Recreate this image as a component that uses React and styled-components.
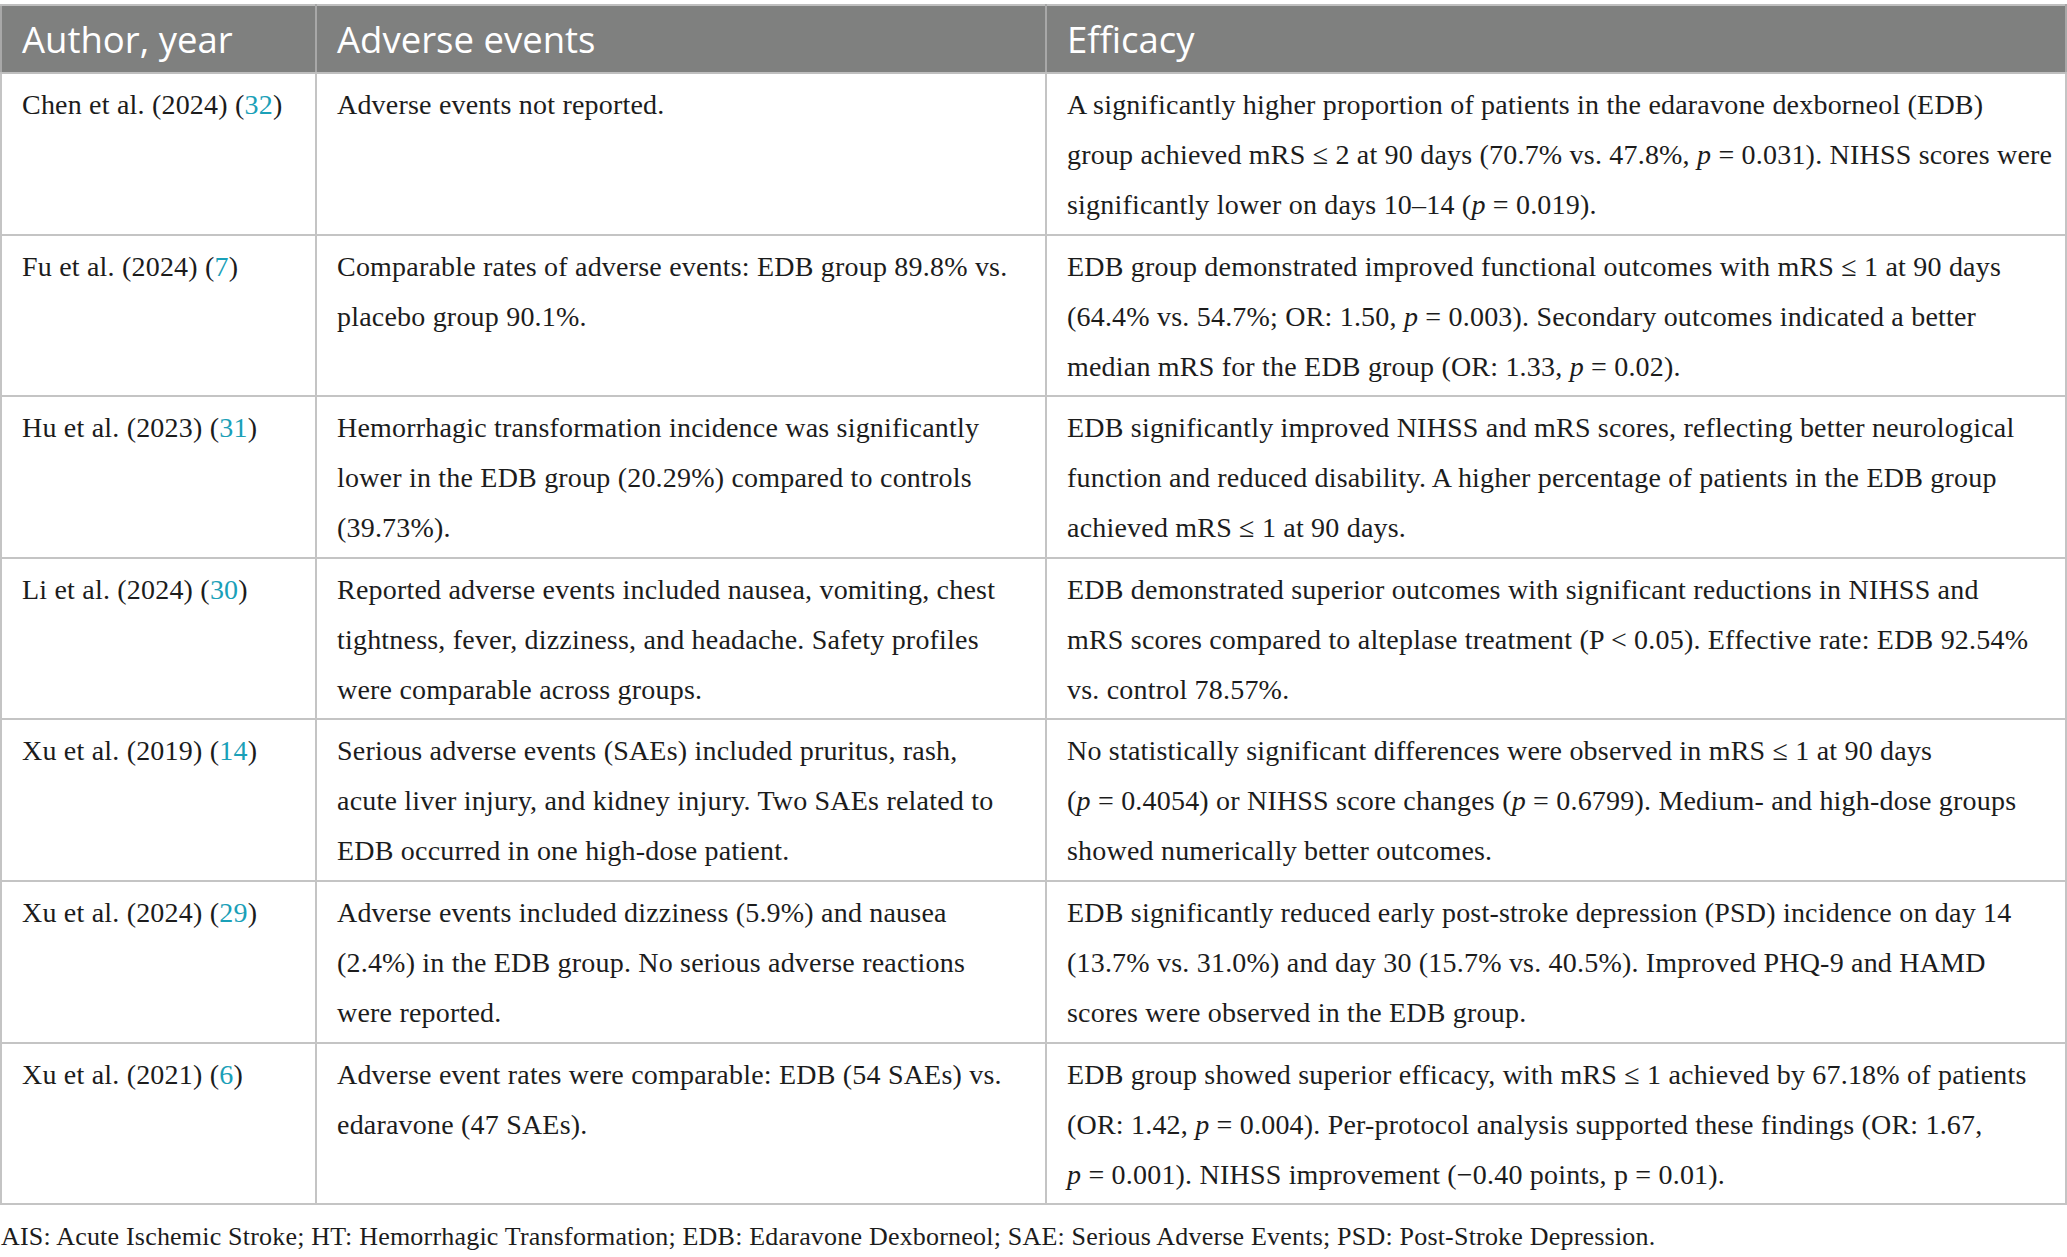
import React from "react";
import styled, { createGlobalStyle } from "styled-components";

const GlobalStyle = createGlobalStyle`
  html, body {
    margin: 0;
    padding: 0;
    background: #ffffff;
  }
  body {
    font-family: "Liberation Serif", "Times New Roman", serif;
    color: #1c1c1c;
  }
`;

const Page = styled.div`
  width: 2067px;
  padding-top: 4px;
  box-sizing: border-box;
`;

const Table = styled.table`
  width: 2067px;
  border-collapse: collapse;
  table-layout: fixed;
  border: 2px solid #bfbfbf;
`;

const HeadCell = styled.th`
  box-sizing: border-box;
  background: #7f807f;
  color: #ffffff;
  font-family: "Open Sans", "Noto Sans", sans-serif;
  font-weight: 400;
  font-size: 36.5px;
  line-height: 40px;
  text-align: left;
  padding: 13px 20px 13px 20px;
  border: 2px solid #a8a8a8;
  border-top-color: #bfbfbf;
  border-bottom-color: #bfbfbf;
  width: ${(p) => p.$w};
  white-space: nowrap;
`;

const BodyCell = styled.td`
  vertical-align: top;
  font-size: 28px;
  letter-spacing: 0.2px;
  line-height: 50px;
  padding: 6px 4px 3.6px 20px;
  border: 2px solid #c4c4c4;
  white-space: nowrap;
  overflow: hidden;
`;

const Line = styled.span`
  display: block;
`;

const Ref = styled.span`
  color: #1aa0b8;
`;

const Footnote = styled.p`
  margin: 0;
  padding: 12px 0 0 1px;
  font-size: 26px;
  letter-spacing: 0.2px;
  line-height: 40px;
  color: #1c1c1c;
`;

const P = () => <i>p</i>;

const rows = [
  {
    author: "Chen et al. (2024)",
    ref: "32",
    adverse: [<>Adverse events not reported.</>],
    efficacy: [
      <>A significantly higher proportion of patients in the edaravone dexborneol (EDB)</>,
      <>group achieved mRS ≤ 2 at 90 days (70.7% vs. 47.8%, <P /> = 0.031). NIHSS scores were</>,
      <>significantly lower on days 10–14 (<P /> = 0.019).</>,
    ],
  },
  {
    author: "Fu et al. (2024)",
    ref: "7",
    adverse: [
      <>Comparable rates of adverse events: EDB group 89.8% vs.</>,
      <>placebo group 90.1%.</>,
    ],
    efficacy: [
      <>EDB group demonstrated improved functional outcomes with mRS ≤ 1 at 90 days</>,
      <>(64.4% vs. 54.7%; OR: 1.50, <P /> = 0.003). Secondary outcomes indicated a better</>,
      <>median mRS for the EDB group (OR: 1.33, <P /> = 0.02).</>,
    ],
  },
  {
    author: "Hu et al. (2023)",
    ref: "31",
    adverse: [
      <>Hemorrhagic transformation incidence was significantly</>,
      <>lower in the EDB group (20.29%) compared to controls</>,
      <>(39.73%).</>,
    ],
    efficacy: [
      <>EDB significantly improved NIHSS and mRS scores, reflecting better neurological</>,
      <>function and reduced disability. A higher percentage of patients in the EDB group</>,
      <>achieved mRS ≤ 1 at 90 days.</>,
    ],
  },
  {
    author: "Li et al. (2024)",
    ref: "30",
    adverse: [
      <>Reported adverse events included nausea, vomiting, chest</>,
      <>tightness, fever, dizziness, and headache. Safety profiles</>,
      <>were comparable across groups.</>,
    ],
    efficacy: [
      <>EDB demonstrated superior outcomes with significant reductions in NIHSS and</>,
      <>mRS scores compared to alteplase treatment (P &lt; 0.05). Effective rate: EDB 92.54%</>,
      <>vs. control 78.57%.</>,
    ],
  },
  {
    author: "Xu et al. (2019)",
    ref: "14",
    adverse: [
      <>Serious adverse events (SAEs) included pruritus, rash,</>,
      <>acute liver injury, and kidney injury. Two SAEs related to</>,
      <>EDB occurred in one high-dose patient.</>,
    ],
    efficacy: [
      <>No statistically significant differences were observed in mRS ≤ 1 at 90 days</>,
      <>(<P /> = 0.4054) or NIHSS score changes (<P /> = 0.6799). Medium- and high-dose groups</>,
      <>showed numerically better outcomes.</>,
    ],
  },
  {
    author: "Xu et al. (2024)",
    ref: "29",
    adverse: [
      <>Adverse events included dizziness (5.9%) and nausea</>,
      <>(2.4%) in the EDB group. No serious adverse reactions</>,
      <>were reported.</>,
    ],
    efficacy: [
      <>EDB significantly reduced early post-stroke depression (PSD) incidence on day 14</>,
      <>(13.7% vs. 31.0%) and day 30 (15.7% vs. 40.5%). Improved PHQ-9 and HAMD</>,
      <>scores were observed in the EDB group.</>,
    ],
  },
  {
    author: "Xu et al. (2021)",
    ref: "6",
    adverse: [
      <>Adverse event rates were comparable: EDB (54 SAEs) vs.</>,
      <>edaravone (47 SAEs).</>,
    ],
    efficacy: [
      <>EDB group showed superior efficacy, with mRS ≤ 1 achieved by 67.18% of patients</>,
      <>(OR: 1.42, <P /> = 0.004). Per-protocol analysis supported these findings (OR: 1.67,</>,
      <><P /> = 0.001). NIHSS improvement (−0.40 points, p = 0.01).</>,
    ],
  },
];

const Lines = ({ items }) => (
  <>
    {items.map((l, i) => (
      <Line key={i}>{l}</Line>
    ))}
  </>
);

export default function App() {
  return (
    <Page>
      <GlobalStyle />
      <Table>
        <thead>
          <tr>
            <HeadCell $w="315px">Author, year</HeadCell>
            <HeadCell $w="730px">Adverse events</HeadCell>
            <HeadCell $w="auto">Efficacy</HeadCell>
          </tr>
        </thead>
        <tbody>
          {rows.map((r, i) => (
            <tr key={i}>
              <BodyCell>
                {r.author} (<Ref>{r.ref}</Ref>)
              </BodyCell>
              <BodyCell>
                <Lines items={r.adverse} />
              </BodyCell>
              <BodyCell>
                <Lines items={r.efficacy} />
              </BodyCell>
            </tr>
          ))}
        </tbody>
      </Table>
      <Footnote>
        AIS: Acute Ischemic Stroke; HT: Hemorrhagic Transformation; EDB: Edaravone Dexborneol; SAE: Serious Adverse Events; PSD: Post-Stroke Depression.
      </Footnote>
    </Page>
  );
}
